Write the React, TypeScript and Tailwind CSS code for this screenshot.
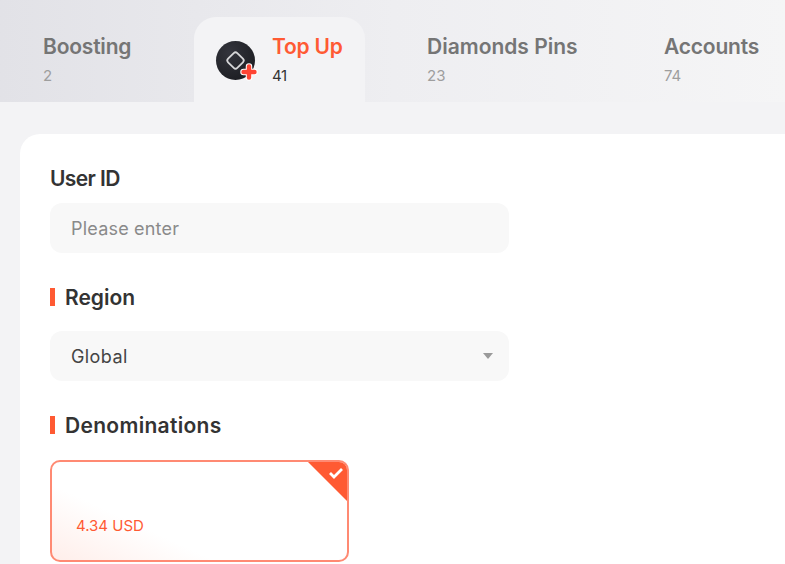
import React from "react";

const font = { fontFamily: "Inter, 'Liberation Sans', sans-serif" };

function Tab({ title, count, className, track }: { title: string; count: string; className: string; track: string }) {
  return (
    <div className={`shrink-0 pt-[32px] ${className}`}>
      <div className={`text-[21px] leading-[30px] font-semibold text-[#757575] whitespace-nowrap ${track}`}>{title}</div>
      <div className="mt-[4px] text-[15px] leading-[20px] text-[#9e9e9e]">{count}</div>
    </div>
  );
}

function Heading({ children, className, track }: { children: React.ReactNode; className: string; track: string }) {
  return (
    <div className={`flex items-center h-[30px] ${className}`}>
      <span className="w-[5px] h-[18px] bg-[#ff5a33] mr-[10px]" />
      <span className={`pt-[1px] text-[21px] leading-[30px] font-semibold text-[#333333] ${track}`}>{children}</span>
    </div>
  );
}

export default function App() {
  return (
    <div className="w-[785px] h-[564px] overflow-hidden bg-[#f3f3f5]" style={font}>
      <div className="h-[102px] flex bg-gradient-to-r from-[#e2e2e7] via-[#eeeef1] via-50% to-[#f5f5f6]">
        <Tab title="Boosting" count="2" className="w-[194px] pl-[43px]" track="tracking-[-0.2px]" />
        <div className="shrink-0 mt-[17px] w-[171px] h-[85px] rounded-t-[22px] bg-[#f3f3f5] flex pl-[22px] pt-[24px]">
          <div className="relative w-[39px] h-[39px] rounded-full bg-[radial-gradient(circle_at_35%_30%,#33343c,#17181c)]">
            <svg viewBox="0 0 39 39" className="absolute inset-0 w-[39px] h-[39px]">
              <rect x="13" y="13" width="13" height="13" rx="2.5" transform="rotate(45 19.5 19.5)" fill="none" stroke="#d6d6d8" strokeWidth="1.8" />
            </svg>
            <svg viewBox="0 0 18 18" className="absolute left-[24px] top-[22px] w-[18px] h-[18px]">
              <path d="M9 3.5v11M3.5 9h11" stroke="#ffffff" strokeWidth="6.5" strokeLinecap="round" />
              <path d="M9 3.5v11M3.5 9h11" stroke="#ff4433" strokeWidth="4.4" strokeLinecap="round" />
            </svg>
          </div>
          <div className="ml-[17px] -mt-[9px]">
            <div className="text-[21px] leading-[30px] font-semibold text-[#ff5a33] whitespace-nowrap tracking-[-0.2px]">Top Up</div>
            <div className="mt-[4px] text-[15px] leading-[20px] tracking-[-0.4px] text-[#333333]">41</div>
          </div>
        </div>
        <Tab title="Diamonds Pins" count="23" className="w-[237px] ml-[62px]" track="" />
        <Tab title="Accounts" count="74" className="w-[120px]" track="tracking-[-0.2px]" />
      </div>
      <div className="ml-[20px] mt-[32px] w-[800px] h-[440px] rounded-tl-[20px] bg-white pl-[30px] pt-[30px]">
        <div className="text-[21px] leading-[30px] font-semibold text-[#333333] tracking-[-0.6px]">User ID</div>
        <div className="mt-[9px] w-[459px] h-[50px] rounded-[12px] bg-[#f8f8f8] flex items-center pl-[21px] text-[18px] tracking-[0.2px] text-[#8a8a8a]">Please enter</div>
        <Heading className="mt-[29px]" track="">Region</Heading>
        <div className="mt-[19px] w-[459px] h-[50px] rounded-[12px] bg-[#f8f8f8] flex items-center justify-between pl-[21px] pr-[16px] text-[18px] tracking-[0.4px] text-[#444444]">
          <span>Global</span>
          <span className="w-0 h-0 border-x-[5px] border-x-transparent border-t-[6px] border-t-[#9a9a9a]" />
        </div>
        <Heading className="mt-[29px]" track="tracking-[0.3px]">Denominations</Heading>
        <div className="relative mt-[20px] w-[299px] h-[102px] rounded-[10px] border-2 border-[#ff8a73] overflow-hidden flex items-end pl-[24px] pb-[24px] text-[15px] leading-[20px] text-[#ff5a33] bg-[linear-gradient(25deg,#ffeeea_0%,#ffffff_32%)]">
          <span>4.34 USD</span>
          <span className="absolute right-0 top-0 w-0 h-0 border-l-[39px] border-l-transparent border-t-[39px] border-t-[#ff5a33]" />
          <svg viewBox="0 0 16 12" className="absolute right-[3px] top-[5px] w-[16px] h-[12px]">
            <path d="M2 6l4 4 8-8" fill="none" stroke="#fff" strokeWidth="2.8" />
          </svg>
        </div>
      </div>
    </div>
  );
}
